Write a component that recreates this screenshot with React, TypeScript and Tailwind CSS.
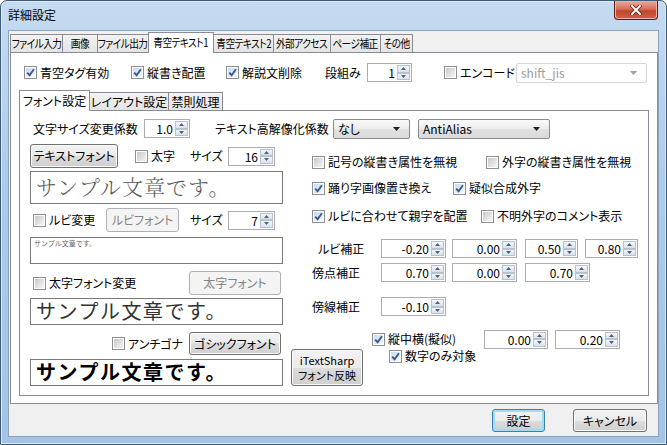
import React from "react";

// ---- small win7 style controls ----

const Box = ({ on = false }: { on?: boolean }) => (
  <span className="w-[13px] h-[13px] shrink-0 border border-[#8e8f8f] bg-white p-px flex">
    <span
      className={`flex-1 flex items-center justify-center ${
        on
          ? "bg-[linear-gradient(135deg,#c6dcf3,#f2f8fe)]"
          : "bg-[linear-gradient(135deg,#c9c9c9,#f5f5f5)]"
      }`}
    >
      {on && (
        <svg width="9" height="9" viewBox="0 0 9 9">
          <path d="M1.2 4.6 L3.6 7.2 L7.9 1.2" fill="none" stroke="#3e5889" strokeWidth="1.9" />
        </svg>
      )}
    </span>
  </span>
);

const Check = ({ on = false, label, className = "" }: { on?: boolean; label: string; className?: string }) => (
  <div className={`flex items-center shrink-0 h-[16px] ${className}`}>
    <Box on={on} />
    <span className="ml-[3px] whitespace-nowrap">{label}</span>
  </div>
);

const SpinHalf = ({ up = false }: { up?: boolean }) => (
  <div className="flex-1 flex items-center justify-center border border-[#b8c2cf] bg-[linear-gradient(#f4f7fb,#d9e2ec)]">
    <svg width="5" height="3" viewBox="0 0 5 3">
      <path d={up ? "M0 3 L2.5 0 L5 3 Z" : "M0 0 L2.5 3 L5 0 Z"} fill="#4f5f78" />
    </svg>
  </div>
);

const Spin = ({ v, className = "" }: { v: string; className?: string }) => (
  <div className={`flex h-[19px] shrink-0 border border-[#abadb3] bg-white ${className}`}>
    <div className="flex-1 text-right pr-[2px] leading-[17px]">{v}</div>
    <div className="w-[14px] flex flex-col py-px pr-px">
      <SpinHalf up />
      <SpinHalf />
    </div>
  </div>
);

const Combo = ({ v, className = "", disabled = false }: { v: string; className?: string; disabled?: boolean }) => (
  <div
    className={`h-[20px] shrink-0 flex items-center rounded-[2px] border ${
      disabled
        ? "border-[#d5d5d5] bg-white text-[#9b9b9b]"
        : "border-[#8a8a8a] bg-[linear-gradient(#fafafa,#ececec_50%,#e2e2e2_50%,#dadada)]"
    } ${className}`}
  >
    <span className="flex-1 pl-[4px] leading-[18px]">{v}</span>
    <svg width="7" height="4" viewBox="0 0 7 4" className="mr-[9px]">
      <path d="M0 0 L3.5 4 L7 0 Z" fill={disabled ? "#a0a0a0" : "#1e1e1e"} />
    </svg>
  </div>
);

const Btn = ({
  children,
  className = "",
  disabled = false,
  def = false,
}: {
  children: React.ReactNode;
  className?: string;
  disabled?: boolean;
  def?: boolean;
}) => (
  <div
    className={`shrink-0 flex flex-col items-center justify-center rounded-[3px] border leading-[14px] ${
      disabled
        ? "border-[#adb2b5] bg-[#f4f4f4] text-[#838383]"
        : def
        ? "border-[#3c7fb1] bg-[linear-gradient(#f2f2f2,#ebebeb_50%,#dddddd_50%,#cfcfcf)] shadow-[inset_0_0_0_2px_#9fdcf7]"
        : "border-[#707070] bg-[linear-gradient(#f2f2f2,#ebebeb_50%,#dddddd_50%,#cfcfcf)] shadow-[inset_0_0_0_1px_#fbfbfb]"
    } ${className}`}
  >
    {children}
  </div>
);

const Sample = ({ className = "", children }: { className?: string; children: React.ReactNode }) => (
  <div className={`w-[253px] shrink-0 border border-[#7a7a7a] bg-white ${className}`}>{children}</div>
);

const outerTabs: [string, string, boolean][] = [
  ["ファイル入力", "w-[53px]", false],
  ["画像", "w-[36px]", false],
  ["ファイル出力", "w-[52px]", false],
  ["青空テキスト1", "w-[66px]", true],
  ["青空テキスト2", "w-[61px]", false],
  ["外部アクセス", "w-[58px]", false],
  ["ページ補正", "w-[51px]", false],
  ["その他", "w-[33px]", false],
];

const innerTabs: [string, string, boolean][] = [
  ["フォント設定", "w-[71px]", true],
  ["レイアウト設定", "w-[80px]", false],
  ["禁則処理", "w-[55px]", false],
];

const Tab = ({ label, w, sel, small }: { label: string; w: string; sel: boolean; small?: boolean }) => (
  <div
    className={`${w} shrink-0 -ml-px first:ml-0 flex items-center justify-center whitespace-nowrap border border-b-0 border-[#898c95] ${
      sel ? "h-[21px] -mb-px bg-white relative z-10" : "h-[18px] bg-[linear-gradient(#f2f2f2,#e4e4e4)]"
    }`}
  >
    <span className={small ? "inline-block text-[11.5px] tracking-[-0.6px] scale-x-[0.84]" : ""}>{label}</span>
  </div>
);

export default function App() {
  return (
    <div className="w-[667px] h-[445px] bg-white text-[12px] text-black font-['Noto_Sans_CJK_JP','Noto_Sans',sans-serif] [font-feature-settings:'palt']">
      <div className="w-full h-full flex flex-col rounded-t-[7px] border border-[#3d5977] bg-[linear-gradient(180deg,#c5dbf1,#adcbea_40%,#a5c4e5)] shadow-[inset_0_0_0_1px_#dfeaf7]">
        {/* title bar */}
        <div className="h-[29px] flex items-start justify-between shrink-0">
          <span className="ml-[7px] mt-[6px] leading-[16px] text-[12px]">詳細設定</span>
          <div className="mr-[8px] w-[44px] h-[19px] rounded-b-[4px] border border-t-0 border-[#5c1f16] bg-[linear-gradient(#e9a898,#d5705a_45%,#c2442a_55%,#d0634a)] flex items-center justify-center shadow-[inset_0_0_0_1px_#eeb1a4]">
            <svg width="12" height="10" viewBox="0 0 12 10">
              <path d="M2 1 L10 9 M10 1 L2 9" stroke="#53221a" strokeWidth="3.6" strokeLinecap="square" />
              <path d="M2 1 L10 9 M10 1 L2 9" stroke="#ffffff" strokeWidth="2" strokeLinecap="square" />
            </svg>
          </div>
        </div>

        {/* client */}
        <div className="mx-[7px] mb-[7px] flex-1 flex flex-col border border-[#8aa3bf] bg-[#f0f0f0]">
          {/* outer tabs */}
          <div className="h-[20px] mt-px ml-px flex items-end">
            {outerTabs.map(([l, w, s]) => (
              <Tab key={l} label={l} w={w} sel={s} small />
            ))}
          </div>
          <div className="ml-px w-[648px] h-[352px] border border-[#898c95] bg-white flex flex-col">
            {/* check row */}
            <div className="mt-[10px] h-[19px] pl-[13px] flex items-center">
              <Check on label="青空タグ有効" className="w-[107px]" />
              <Check on label="縦書き配置" className="w-[95px]" />
              <Check on label="解説文削除" className="w-[99px]" />
              <span className="w-[42px]">段組み</span>
              <Spin v="1" className="w-[45px]" />
              <Check label="エンコード" className="ml-[32px] w-[72px]" />
              <Combo v="shift_jis" disabled className="w-[131px]" />
            </div>

            {/* inner tabs */}
            <div className="mt-[8px] ml-[8px] h-[20px] flex items-end">
              {innerTabs.map(([l, w, s]) => (
                <Tab key={l} label={l} w={w} sel={s} />
              ))}
            </div>
            <div className="ml-[8px] w-[630px] h-[286px] border border-[#898c95] bg-white pl-[10px] pt-[8px] flex flex-col">
              {/* row A */}
              <div className="h-[19px] flex items-center">
                <span className="ml-[3px] w-[111px]">文字サイズ変更係数</span>
                <Spin v="1.0" className="w-[46px]" />
                <span className="ml-[25px] w-[118px]">テキスト高解像化係数</span>
                <Combo v="なし" className="w-[77px]" />
                <Combo v="AntiAlias" className="ml-[8px] w-[132px]" />
              </div>

              <div className="mt-[6px] flex">
                {/* left column */}
                <div className="w-[253px] flex flex-col">
                  <div className="h-[24px] flex items-center">
                    <Btn className="w-[88px] h-[24px]">テキストフォント</Btn>
                    <Check label="太字" className="ml-[17px] w-[55px]" />
                    <span className="w-[38px]">サイズ</span>
                    <Spin v="16" className="w-[47px] h-[18px]" />
                  </div>
                  <Sample className="mt-[3px] h-[33px]">
                    <div className="pl-[5px] pt-[1px] text-[21px] leading-[27px] text-[#555] font-light tracking-[1px] font-['Noto_Serif_CJK_JP','Noto_Sans_CJK_JP',serif] [font-feature-settings:normal]">
                      サンプル文章です。
                    </div>
                  </Sample>
                  <div className="mt-[4px] h-[24px] flex items-center">
                    <Check label="ルビ変更" className="ml-[3px] w-[73px]" />
                    <Btn disabled className="w-[73px] h-[24px]">ルビフォント</Btn>
                    <span className="ml-[11px] w-[38px]">サイズ</span>
                    <Spin v="7" className="w-[47px] h-[18px]" />
                  </div>
                  <Sample className="mt-[5px] h-[27px]">
                    <div className="pl-[3px] pt-[1px] text-[7px] leading-[9px] text-[#666] [font-feature-settings:normal]">サンプル文章です。</div>
                  </Sample>
                  <div className="mt-[7px] h-[24px] flex items-center">
                    <Check label="太字フォント変更" className="ml-[3px] w-[156px]" />
                    <Btn disabled className="w-[92px] h-[24px]">太字フォント</Btn>
                  </div>
                  <Sample className="mt-[3px] h-[27px]">
                    <div className="pl-[5px] text-[20px] leading-[24px] text-[#333] tracking-[1.5px] [font-feature-settings:normal]">
                      サンプル文章です。
                    </div>
                  </Sample>
                  <div className="mt-[7px] h-[23px] flex items-center">
                    <Check label="アンチゴナ" className="ml-[82px] w-[77px]" />
                    <Btn className="w-[92px] h-[23px]">ゴシックフォント</Btn>
                  </div>
                  <Sample className="mt-[4px] h-[27px]">
                    <div className="pl-[5px] text-[20px] leading-[24px] font-bold tracking-[1.5px] [font-feature-settings:normal]">
                      サンプル文章です。
                    </div>
                  </Sample>
                </div>

                {/* right region */}
                <div className="ml-[8px] flex-1 flex flex-col">
                  <div className="mt-[10px] flex items-center">
                    <Check label="記号の縦書き属性を無視" className="ml-[21px] w-[174px]" />
                    <Check label="外字の縦書き属性を無視" />
                  </div>
                  <div className="mt-[10px] flex items-center">
                    <Check on label="踊り字画像置き換え" className="ml-[21px] w-[141px]" />
                    <Check on label="疑似合成外字" />
                  </div>
                  <div className="mt-[12px] flex items-center">
                    <Check on label="ルビに合わせて親字を配置" className="ml-[21px] w-[169px]" />
                    <Check label="不明外字のコメント表示" />
                  </div>
                  <div className="mt-[15px] h-[19px] flex items-center">
                    <span className="ml-[27px] w-[63px]">ルビ補正</span>
                    <Spin v="-0.20" className="w-[65px]" />
                    <Spin v="0.00" className="ml-[6px] w-[65px]" />
                    <Spin v="0.50" className="ml-[8px] w-[53px]" />
                    <Spin v="0.80" className="ml-[7px] w-[53px]" />
                  </div>
                  <div className="mt-[5px] h-[19px] flex items-center">
                    <span className="ml-[21px] w-[69px]">傍点補正</span>
                    <Spin v="0.70" className="w-[65px]" />
                    <Spin v="0.00" className="ml-[6px] w-[65px]" />
                    <Spin v="0.70" className="ml-[8px] w-[65px]" />
                  </div>
                  <div className="mt-[15px] h-[19px] flex items-center">
                    <span className="ml-[21px] w-[69px]">傍線補正</span>
                    <Spin v="-0.10" className="w-[65px]" />
                  </div>
                  <div className="mt-[14px] flex items-start">
                    <Btn className="mt-[19px] w-[72px] h-[37px] text-[11px] leading-[15px]">
                      <span className="leading-[15px]">iTextSharp</span>
                      <span className="leading-[15px]">フォント反映</span>
                    </Btn>
                    <div className="ml-[9px] flex flex-col">
                      <div className="h-[18px] flex items-center">
                        <Check on label="縦中横(擬似)" className="w-[112px]" />
                        <Spin v="0.00" className="w-[64px] h-[18px]" />
                        <Spin v="0.20" className="ml-[7px] w-[65px] h-[18px]" />
                      </div>
                      <Check on label="数字のみ対象" className="ml-[17px]" />
                    </div>
                  </div>
                </div>
              </div>
            </div>
          </div>

          {/* dialog buttons */}
          <div className="mt-[5px] pr-[11px] flex justify-end gap-[28px]">
            <Btn def className="w-[53px] h-[23px]">設定</Btn>
            <Btn className="w-[74px] h-[23px]">キャンセル</Btn>
          </div>
        </div>
      </div>
    </div>
  );
}
